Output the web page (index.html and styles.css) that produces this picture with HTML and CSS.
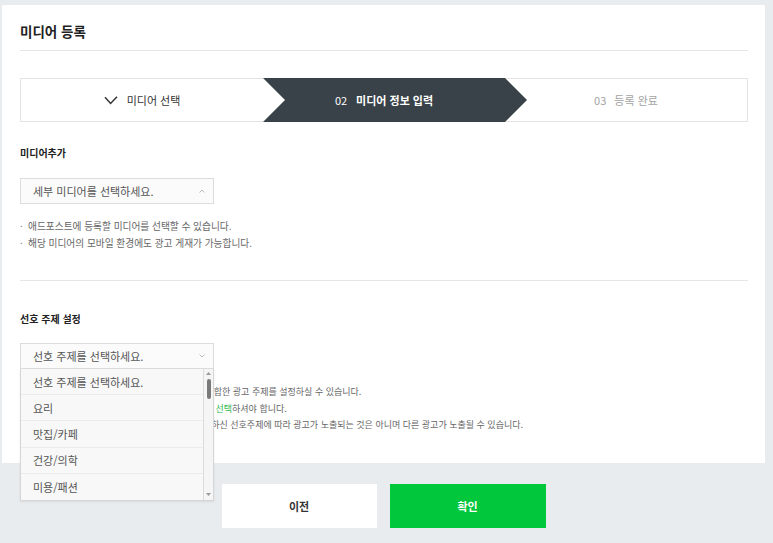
FILE: index.html
```html
<!DOCTYPE html>
<html lang="ko">
<head>
<meta charset="utf-8">
<title>미디어 등록</title>
<link rel="stylesheet" href="styles.css">
</head>
<body>
<div class="page">
  <div class="card">
    <h1 class="title">미디어 등록</h1>

    <ol class="steps">
      <li class="step step-done">
        <svg class="check" width="14" height="9" viewBox="0 0 14 9" aria-hidden="true"><path d="M1 1.2 L6.6 7.4 L13 0.8" fill="none" stroke="#333" stroke-width="1.5"/></svg>
        <span>미디어 선택</span>
      </li>
      <li class="step step-active">
        <span class="num">02</span><b>미디어 정보 입력</b>
      </li>
      <li class="step step-todo">
        <span class="num">03</span><span>등록 완료</span>
      </li>
    </ol>

    <section class="sec">
      <h2 class="sec-title">미디어추가</h2>
      <div class="select">
        <span>세부 미디어를 선택하세요.</span>
        <svg class="caret" width="6" height="4" viewBox="0 0 6 4" aria-hidden="true"><path d="M0.5 3.5 L3 1 L5.5 3.5" fill="none" stroke="#bbb" stroke-width="1"/></svg>
      </div>
      <ul class="notes">
        <li>애드포스트에 등록할 미디어를 선택할 수 있습니다.</li>
        <li>해당 미디어의 모바일 환경에도 광고 게재가 가능합니다.</li>
      </ul>
    </section>

    <section class="sec sec-pref">
      <h2 class="sec-title">선호 주제 설정</h2>
      <div class="select-wrap">
        <div class="select">
          <span>선호 주제를 선택하세요.</span>
          <svg class="caret" width="6" height="4" viewBox="0 0 6 4" aria-hidden="true"><path d="M0.5 0.5 L3 3 L5.5 0.5" fill="none" stroke="#bbb" stroke-width="1"/></svg>
        </div>
        <div class="listbox">
          <ul class="opts">
            <li>선호 주제를 선택하세요.</li>
            <li>요리</li>
            <li>맛집/카페</li>
            <li>건강/의학</li>
            <li>미용/패션</li>
          </ul>
          <div class="scroll">
            <svg width="5" height="3" viewBox="0 0 5 3" aria-hidden="true"><path d="M0 3 L2.5 0 L5 3 Z" fill="#999"/></svg>
            <span class="thumb"></span>
            <span class="spacer"></span>
            <svg width="5" height="3" viewBox="0 0 5 3" aria-hidden="true"><path d="M0 0 L2.5 3 L5 0 Z" fill="#999"/></svg>
          </div>
        </div>
      </div>
      <ul class="notes notes-pref">
        <li>최대3개까지 내 미디어들의 콘텐츠 성격에 가장 적합한 광고 주제를 설정하실 수 있습니다.</li>
        <li>선호 주제는 최소 1개에서 최대 3개 이내로 반드시&nbsp;<em class="hl">선택</em>하셔야 합니다.</li>
        <li>선호 주제는 광고 참고용으로 사용되며, 항상 설정하신 선호주제에 따라 광고가 노출되는 것은 아니며 다른 광고가 노출될 수 있습니다.</li>
      </ul>
    </section>
  </div>

  <div class="actions">
    <button class="btn btn-prev" type="button">이전</button>
    <button class="btn btn-ok" type="button">확인</button>
  </div>
</div>
</body>
</html>
```

FILE: styles.css
```css
* { box-sizing: border-box; }

body {
  margin: 0;
  background: #e9ecef;
  font-family: "Noto Sans CJK KR", "Noto Sans", sans-serif;
  color: #333;
}

.page {
  width: 763px;
  margin-left: 2px;
  padding-top: 5px;
}

.card {
  background: #fff;
  padding: 17px 17px 0 18px;
}

.title {
  margin: 0;
  padding-bottom: 10px;
  border-bottom: 1px solid #e6e6e6;
  font-size: 13.5px;
  line-height: 18px;
  font-weight: 700;
  color: #222;
}

/* steps */
.steps {
  list-style: none;
  margin: 27px 0 0;
  padding: 0;
  height: 44px;
  display: grid;
  grid-template-columns: repeat(3, 1fr);
  border: 1px solid #e3e3e3;
}

.step {
  display: flex;
  align-items: center;
  justify-content: center;
  font-size: 11px;
  line-height: 14px;
}

.step-done { gap: 9px; color: #333; }

.step-active {
  position: relative;
  margin: -1px 0;
  background: #394249;
  color: #fff;
  gap: 9px;
}
.step-active b { font-weight: 700; }
.step-active::before {
  content: "";
  position: absolute;
  left: 0;
  top: 0;
  border-style: solid;
  border-width: 22px 0 22px 22px;
  border-color: transparent transparent transparent #fff;
}
.step-active::after {
  content: "";
  position: absolute;
  left: 100%;
  top: 0;
  border-style: solid;
  border-width: 22px 0 22px 22px;
  border-color: transparent transparent transparent #394249;
}

.step-todo { color: #a3a3a3; gap: 8px; }

/* sections */
.sec {
  padding: 24px 0 28px;
  border-bottom: 1px solid #e6e6e6;
}
.sec-pref {
  padding-top: 31px;
  padding-bottom: 29px;
  border-bottom: none;
}

.sec-title {
  margin: 0 0 18px;
  font-size: 10px;
  line-height: 14px;
  font-weight: 700;
  color: #222;
}
.sec-pref .sec-title { margin-bottom: 17px; }

.select {
  width: 194px;
  height: 26px;
  display: flex;
  align-items: center;
  justify-content: space-between;
  padding: 0 8px 0 12px;
  border: 1px solid #dcdcdc;
  background: #fbfbfb;
  font-size: 11px;
  color: #555;
}

.notes {
  list-style: none;
  margin: 14px 0 0;
  padding: 0;
  font-size: 9.7px;
  line-height: 17px;
  color: #666;
}
.notes-pref {
  margin-top: 15px;
  font-size: 9px;
  line-height: 16.5px;
}
.notes li { display: flex; white-space: nowrap; }
.notes li::before {
  content: "·";
  width: 8px;
  flex: none;
}
.hl { font-style: normal; color: #2db84d; }

/* open dropdown */
.select-wrap {
  position: relative;
  width: 194px;
}
.listbox {
  position: absolute;
  top: 100%;
  left: 0;
  z-index: 2;
  width: 194px;
  height: 132px;
  display: flex;
  background: #f8f8f8;
  border: 1px solid #d6d6d6;
  border-top: none;
  box-shadow: 0 1px 2px rgba(0, 0, 0, 0.08);
}
.opts {
  flex: 1;
  list-style: none;
  margin: 0;
  padding: 0;
}
.opts li {
  height: 26.2px;
  display: flex;
  align-items: center;
  padding-left: 12px;
  border-bottom: 1px solid #ebebeb;
  font-size: 11px;
  color: #555;
}
.opts li:last-child { border-bottom: none; }

.scroll {
  width: 10px;
  display: flex;
  flex-direction: column;
  align-items: center;
  padding: 3px 0 4px;
  border-left: 1px solid #dcdcdc;
  background: #f5f5f5;
}
.thumb {
  width: 4px;
  height: 20px;
  margin-top: 4px;
  border-radius: 2px;
  background: #7a7a7a;
}
.spacer { flex: 1; }

/* actions */
.actions {
  display: flex;
  justify-content: center;
  gap: 13px;
  margin-top: 21px;
}
.btn {
  height: 44px;
  border: none;
  font-family: inherit;
  font-size: 11px;
  font-weight: 700;
  cursor: pointer;
}
.btn-prev { width: 155px; background: #fff; color: #333; }
.btn-ok { width: 156px; background: #00c73c; color: #fff; }
```
